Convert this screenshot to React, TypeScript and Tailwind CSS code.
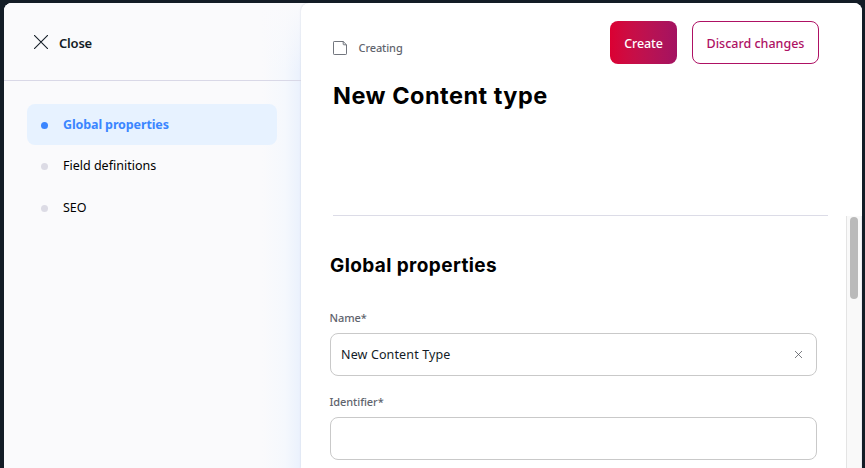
const steps = [
  { label: 'Global properties', active: true },
  { label: 'Field definitions', active: false },
  { label: 'SEO', active: false },
];

function Sidebar() {
  return (
    <aside className="flex w-[297px] shrink-0 flex-col bg-[#fafafc] bg-[linear-gradient(to_bottom,#fafafc,transparent_70px),linear-gradient(to_right,transparent_258px,#f5f8fd_281px,#eaf1fd_297px)]">
      <button className="flex h-[78px] w-full shrink-0 items-center border-b border-[#d9d8e7] pl-[30px] text-[#131c26]">
        <svg width="14" height="14" viewBox="0 0 14 14" fill="none" stroke="currentColor" strokeWidth="1.05" strokeLinecap="round">
          <path d="M.4.4l13.2 13.2M13.6.4L.4 13.6" />
        </svg>
        <span className="ml-[11px] mt-[3px] text-[13px] font-semibold leading-4 tracking-[-0.2px]">Close</span>
      </button>
      <nav className="flex flex-col pl-[23px] pt-[23px]">
        {steps.map((step) => (
          <a
            key={step.label}
            className={
              step.active
                ? 'flex h-[41px] w-[250px] items-center rounded-lg bg-[#e7f2ff] pl-[14px] text-[12.5px] font-bold tracking-[-0.12px] text-[#3b86ff]'
                : 'flex h-[42px] w-[250px] items-center pl-[14px] text-[12.5px] text-black'
            }
          >
            <span className={step.active ? 'mt-px size-[7px] rounded-full bg-[#3b86ff]' : 'mt-px size-[7px] rounded-full bg-[#dcdbe5]'} />
            <span className={step.active ? 'ml-[15px] mt-[2px]' : 'ml-[15px]'}>{step.label}</span>
          </a>
        ))}
      </nav>
    </aside>
  );
}

function Field({ label, value }: { label: string; value: string }) {
  return (
    <div className="mb-4">
      <label className="-ml-[0.5px] block h-[25px] text-[11px] font-medium leading-[19px] tracking-[-0.08px] text-[#5f646d]">{label}</label>
      <div className="flex h-[43px] w-[487px] items-center justify-between rounded-lg border border-[#c9c9c9] bg-white pl-[10px] pr-[14px] text-[12.5px] text-[#131c26]">
        <span className="pt-[2px] tracking-[0.13px]">{value}</span>
        {value && (
          <svg width="7" height="7" viewBox="0 0 7 7" fill="none" stroke="#4f5258" strokeWidth=".75">
            <path d="M0 0l7 7M7 0L0 7" />
          </svg>
        )}
      </div>
    </div>
  );
}

export default function App() {
  return (
    <div className="h-[468px] w-[865px] overflow-hidden bg-[#131c26] pl-1 pt-[3px] font-['Noto_Sans',sans-serif]">
      <div className="flex h-[465px] w-[858px] overflow-hidden rounded-t-lg bg-[#fafafc]">
        <Sidebar />
        <main className="flex w-[561px] flex-col rounded-tl-lg bg-white shadow-[0_0_2px_#cfd3e0]">
          <header className="h-[213px] shrink-0 pl-8">
            <div className="flex h-[78px] items-start justify-between pr-[43px] pt-[18px]">
              <div className="mt-[19px] flex items-center">
                <svg width="14" height="14" viewBox="0 0 14 14" fill="none" stroke="#62666f" strokeWidth=".9" strokeLinejoin="round">
                  <path d="M10.2.5H1.2Q.5.5.5 1.2v11.6q0 .7.7.7h11.6q.7 0 .7-.7V3.8zM10.2.5v2.6q0 .7.7.7h2.6" />
                </svg>
                <span className="ml-[11.5px] text-[11px] font-medium leading-4 tracking-[-0.1px] text-[#5f646d]">Creating</span>
              </div>
              <div className="flex gap-[15px] text-[12.5px] font-medium">
                <button className="h-[43px] w-[67px] rounded-lg bg-linear-to-r from-[#db0032] to-[#a31261] pt-[3px] tracking-[-0.12px] text-white">Create</button>
                <button className="h-[43px] w-[127px] rounded-lg border border-[#ae1164] pt-[3px] text-[#ae1164]">Discard changes</button>
              </div>
            </div>
            <h1 className="font-[Inter] text-[23.5px] font-bold leading-[30px] tracking-[0.5px]">New Content type</h1>
            <div className="mt-[104px] w-[495px] border-t border-[#dcdce7]" />
          </header>
          <div className="flex min-h-0 grow justify-between">
            <section className="pl-[29px] pt-[38px]">
              <h2 className="mb-[30px] font-[Inter] text-[19px] font-bold leading-6 tracking-[0.4px]">Global properties</h2>
              <Field label="Name*" value="New Content Type" />
              <Field label="Identifier*" value="" />
            </section>
            <div className="w-[16px] border-l border-r border-l-[#e4e4e4] border-r-[#ebebf2] bg-[#f9f9f9] pl-[3px] pt-px">
              <div className="h-[82px] w-2 rounded-full bg-[#bababa]" />
            </div>
          </div>
        </main>
      </div>
    </div>
  );
}
